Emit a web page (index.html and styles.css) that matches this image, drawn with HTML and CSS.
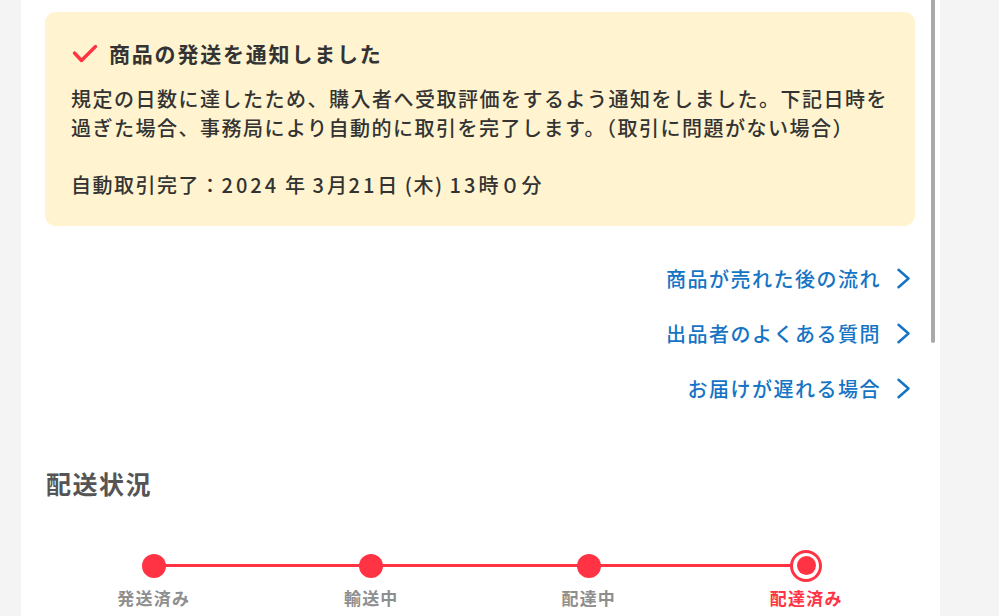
FILE: index.html
```html
<!DOCTYPE html>
<html lang="ja">
<head>
    <meta charset="UTF-8">
    <meta name="viewport" content="width=device-width, initial-scale=1.0">
    <title>取引画面</title>
    <link rel="stylesheet" href="styles.css">
</head>
<body>
    <div class="page">
        <div class="panel">
            <div class="notice">
                <div class="notice-title">
                    <svg class="check" width="26" height="19" viewBox="0 0 26 19">
                        <path d="M2.5 9 L9.5 16.5 L23.5 2.5" fill="none" stroke="#ff3344" stroke-width="3.4" stroke-linecap="round" stroke-linejoin="round"/>
                    </svg>
                    <span>商品の発送を通知しました</span>
                </div>
                <p class="notice-text">規定の日数に達したため、購入者へ受取評価をするよう通知をしました。下記日時を過ぎた場合、事務局により自動的に取引を完了します。（取引に問題がない場合）</p>
                <p class="notice-text notice-date">自動取引完了：<span class="num">2024</span> 年 <span class="num">3</span>月<span class="num">21</span>日 (木) <span class="num">13</span>時０分</p>
            </div>

            <ul class="links">
                <li><a href="#">商品が売れた後の流れ<svg class="chevron" width="15" height="21" viewBox="0 0 15 21"><path d="M2.5 1.8 L12.5 10.5 L2.5 19.2" fill="none" stroke="#1574c4" stroke-width="2.5" stroke-linecap="round" stroke-linejoin="round"/></svg></a></li>
                <li><a href="#">出品者のよくある質問<svg class="chevron" width="15" height="21" viewBox="0 0 15 21"><path d="M2.5 1.8 L12.5 10.5 L2.5 19.2" fill="none" stroke="#1574c4" stroke-width="2.5" stroke-linecap="round" stroke-linejoin="round"/></svg></a></li>
                <li><a href="#">お届けが遅れる場合<svg class="chevron" width="15" height="21" viewBox="0 0 15 21"><path d="M2.5 1.8 L12.5 10.5 L2.5 19.2" fill="none" stroke="#1574c4" stroke-width="2.5" stroke-linecap="round" stroke-linejoin="round"/></svg></a></li>
            </ul>

            <h2 class="section-title">配送状況</h2>

            <ol class="steps">
                <li class="step done"><span class="dot"></span><span class="label">発送済み</span></li>
                <li class="step done"><span class="dot"></span><span class="label">輸送中</span></li>
                <li class="step done"><span class="dot"></span><span class="label">配達中</span></li>
                <li class="step current"><span class="dot"></span><span class="label">配達済み</span></li>
            </ol>
        </div>
        <div class="scrollbar"></div>
    </div>
</body>
</html>
```

FILE: styles.css
```css
body {
    font-family: "Noto Sans CJK JP", "Noto Sans", sans-serif;
    background-color: #f4f4f4;
    margin: 0;
    padding: 0;
    height: 616px;
    overflow: hidden;
    color: #333;
}
.page {
    position: relative;
    width: 919px;
    margin-left: 21px;
}
.panel {
    background-color: #fff;
    padding: 12px 25px 0 24px;
    height: 604px;
    overflow: hidden;
}
.scrollbar {
    position: absolute;
    top: -4px;
    right: 5px;
    width: 4px;
    height: 347px;
    border-radius: 2px;
    background-color: #a9a9a9;
}

/* notice box */
.notice {
    background-color: #fff4cf;
    border-radius: 11px;
    padding: 26px 24px 26px 26px;
}
.notice-title {
    display: flex;
    align-items: center;
    height: 30px;
    font-size: 21px;
    font-weight: 700;
    letter-spacing: 1.8px;
    color: #333;
    margin-left: 1px;
}
.check {
    margin-right: 11px;
    flex-shrink: 0;
}
.notice-text {
    margin: 0;
    font-size: 20px;
    font-weight: 500;
    letter-spacing: 1.5px;
    line-height: 28.7px;
}
.notice-text:first-of-type {
    margin-top: 17px;
}
.notice-date {
    margin-top: 28.7px;
}
.num {
    letter-spacing: 3px;
}

/* links */
.links {
    list-style: none;
    margin: 25px 0 0;
    padding: 0;
}
.links li {
    display: flex;
    justify-content: flex-end;
    height: 55px;
    align-items: center;
}
.links a {
    display: flex;
    align-items: center;
    color: #1574c4;
    text-decoration: none;
    font-size: 20px;
    font-weight: 500;
    letter-spacing: 1.5px;
    margin-right: 4px;
}
.chevron {
    margin-left: 15px;
}

/* delivery status */
.section-title {
    margin: 49px 0 0 1px;
    font-size: 25px;
    line-height: 36px;
    font-weight: 700;
    letter-spacing: 1.5px;
    color: #555;
}
.steps {
    list-style: none;
    margin: 49px 0 0;
    padding: 0;
    display: grid;
    grid-template-columns: repeat(4, 1fr);
}
.step {
    position: relative;
    display: flex;
    flex-direction: column;
    align-items: center;
}
.step::after {
    content: "";
    position: absolute;
    top: 14.5px;
    left: 50%;
    width: 100%;
    height: 3px;
    background-color: #ff3344;
}
.step:last-child::after {
    display: none;
}
.dot {
    position: relative;
    z-index: 1;
    width: 32px;
    height: 32px;
    display: flex;
    align-items: center;
    justify-content: center;
}
.dot::before {
    content: "";
    width: 24px;
    height: 24px;
    border-radius: 50%;
    background-color: #ff3344;
}
.current .dot {
    box-sizing: border-box;
    border: 3px solid #ff3344;
    border-radius: 50%;
    background-color: #fff;
}
.current .dot::before {
    width: 19px;
    height: 19px;
}
.label {
    margin-top: 4px;
    font-size: 17px;
    line-height: 24px;
    font-weight: 700;
    letter-spacing: 1.2px;
    color: #8e8e8e;
}
.current .label {
    color: #ff3344;
}
```
